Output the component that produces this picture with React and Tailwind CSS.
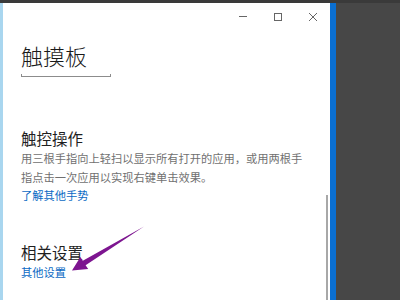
import React from "react";

const font = { fontFamily: '"Noto Sans CJK SC", "Noto Sans", sans-serif' };

export default function App() {
  return (
    <div className="relative w-[400px] h-[300px] overflow-hidden bg-[#474747] flex flex-col" style={font}>
      <div className="h-[3px] bg-[#3a3a3a] shrink-0" />
      <div className="flex flex-1 min-h-0">
        <div className="w-[3px] bg-[#a9d6ef] shrink-0" />
        <div className="relative w-[327px] bg-white shrink-0 flex flex-col">
          <div className="flex justify-end h-[27px] text-[#555]">
            <div className="w-[35px] flex items-center justify-center">
              <div className="w-[8px] h-px bg-[#666]" />
            </div>
            <div className="w-[35px] flex items-center justify-center">
              <div className="w-[8px] h-[8px] border border-[#666]" />
            </div>
            <div className="w-[35px] flex items-center justify-center">
              <svg width="10" height="10" viewBox="0 0 10 10">
                <path d="M1 1 L9 9 M9 1 L1 9" stroke="#666" strokeWidth="1" fill="none" />
              </svg>
            </div>
          </div>
          <div className="pl-[18px] flex flex-col">
            <div className="mt-[11px] text-[22px] leading-[28px] font-light text-[#1a1a1a]">触摸板</div>
            <div className="mt-[5px] w-[90px] h-[3px] border-b border-l border-r border-[#8c8c8c]" />
            <div className="mt-[50px] text-[15.5px] leading-[22px] text-[#1f1f1f]">触控操作</div>
            <div className="text-[11.25px] leading-[19px] text-[#707070]">
              用三根手指向上轻扫以显示所有打开的应用，或用两根手
              <br />
              指点击一次应用以实现右键单击效果。
            </div>
            <div className="text-[11.25px] leading-[16px] text-[#0b6ac4]">了解其他手势</div>
            <div className="mt-[38px] text-[15.5px] leading-[22px] text-[#1f1f1f]">相关设置</div>
            <div className="text-[11.25px] leading-[18px] text-[#0b6ac4]">其他设置</div>
          </div>
          <div className="absolute right-[2px] top-[192px] bottom-0 w-[2px] bg-[#a8a8a8]" />
        </div>
        <div className="w-[6px] bg-[#0a6fd2] shrink-0" />
        <div className="flex-1 bg-[#474747]" />
      </div>
      <svg className="absolute left-0 top-0" width="400" height="300" viewBox="0 0 400 300">
        <polygon
          points="144,226.5 85.6,265.2 88.2,269 72,270.5 80.4,257 82.8,260.8"
          fill="#7d1590"
        />
      </svg>
    </div>
  );
}
